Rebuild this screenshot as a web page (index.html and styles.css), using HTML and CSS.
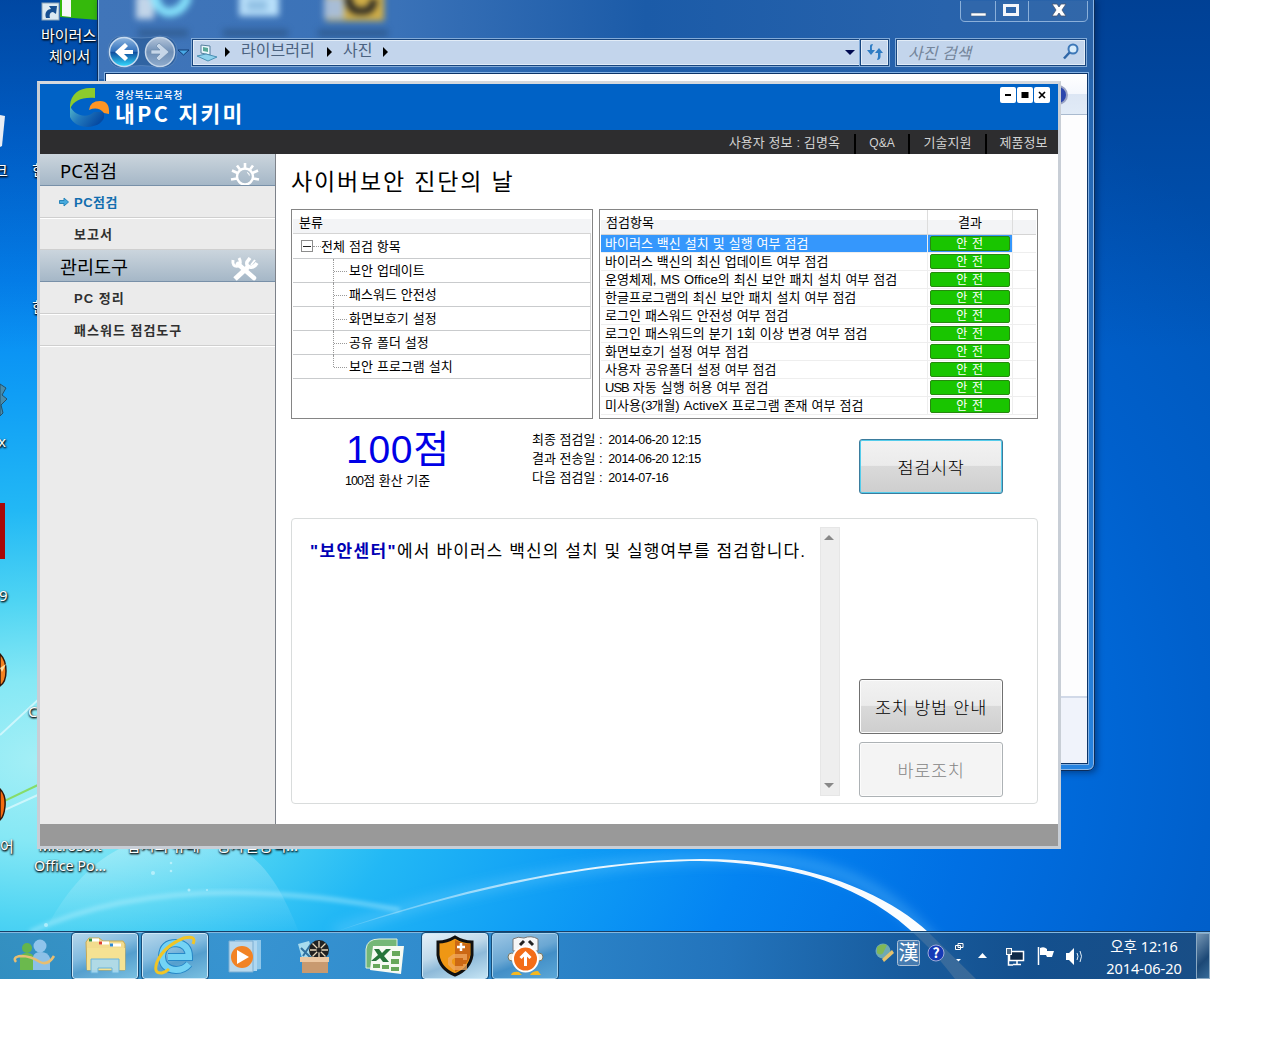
FILE: index.html
```html
<!DOCTYPE html>
<html lang="ko">
<head>
<meta charset="utf-8">
<title>내PC 지키미</title>
<link rel="stylesheet" href="styles.css">
</head>
<body>
<div class="desktop">
  <svg class="wallpaper" width="1210" height="979" viewBox="0 0 1210 979">
    <defs>
      <filter id="soft"><feGaussianBlur stdDeviation="2"/></filter>
      <filter id="glow" x="-20%" y="-20%" width="140%" height="140%"><feGaussianBlur stdDeviation="6"/></filter>
      <linearGradient id="orb" x1="0" y1="0" x2="0" y2="1"><stop offset="0" stop-color="#fff" stop-opacity=".3"/><stop offset="1" stop-color="#fff" stop-opacity="0"/></linearGradient>
      <linearGradient id="beam" x1="0" x2="1"><stop offset="0" stop-color="#fff" stop-opacity=".1"/><stop offset=".4" stop-color="#fff" stop-opacity=".9"/><stop offset="1" stop-color="#fff"/></linearGradient>
    </defs>
    <path d="M40 940C70 880 110 835 180 835S275 870 302 940Z" fill="url(#orb)"/>
    <path d="M30 932C120 890 240 880 400 910" fill="none" stroke="#c4f4ff" stroke-opacity=".5" stroke-width="4" filter="url(#soft)"/>
    <path d="M335 932C450 890 600 858 730 858S900 900 965 979" fill="none" stroke="#7fd4ff" stroke-opacity=".35" stroke-width="10" filter="url(#glow)"/>
    <path d="M335 932C470 884 600 860 700 859C810 858 890 896 928 932L976 979L955 979C900 905 830 864 700 861C600 861 470 888 335 932Z" fill="url(#beam)"/>
    <path d="M0 803L40 784" stroke="#86dc6a" stroke-width="2"/><path d="M0 812L40 794M0 735L40 698" stroke="#e4fbff" stroke-width="2" stroke-opacity=".7"/>
    <g fill="#d8f8ff" fill-opacity=".6"><circle cx="153" cy="873" r="2"/><circle cx="171" cy="863" r="1.3"/><circle cx="171" cy="871" r="1.3"/><circle cx="189" cy="890" r="1.5"/><circle cx="46" cy="925" r="2"/><circle cx="207" cy="890" r="1"/></g>
    <path d="M0 115L5 116L2 146L0 147Z" fill="#e8edf4"/>
    <path d="M0 384L6 388L2 395L7 399L1 405L3 413L0 416Z" fill="#4a8cab" stroke="#24506a"/>
    <rect y="503" width="5" height="56" fill="#a80808"/>
    <path d="M0 654Q6 660 6 671T0 686Z" fill="#f58220" stroke="#31170a" stroke-width="1.5"/><path d="M0 668L6 664L2 672Z" fill="#ffe0a0"/>
    <path d="M0 789Q6 795 5 806T0 820Z" fill="#f56c10" stroke="#31170a" stroke-width="1.5"/>
    <path d="M60 0H99V20L60 17Z" fill="#35b90c"/><path d="M62 0H71V17L62 16Z" fill="#f7f7f7"/>
    <rect x="42" y="3" width="17" height="17" fill="#dce9f2" stroke="#8aa3b8"/><path d="M46 18C44 12 48 9 51 9L49 6L57 6L56 14L53 12C50 12 49 15 50 18Z" fill="#174f91"/>
  </svg>
  <span class="label l1">바이러스</span><span class="label l2">체이서</span>
  <span class="label l3">크</span><span class="label l4">한</span><span class="label l5">한</span>
  <span class="label l6">x</span><span class="label l7">9</span><span class="label l8">C</span><span class="label l9">어</span>
  <span class="label l10">Microsoft<br>Office Po...</span><span class="label l11">압시의 유래</span><span class="label l12">공사설정덱...</span>

  <section class="explorer">
    <svg class="behind-glass" width="320" height="50" viewBox="0 0 320 50">
      <g class="blurred"><rect x="38" y="-4" width="18" height="24" fill="#c2d5e9"/><path d="M56 -6Q60 16 74 13Q86 11 90 -4" fill="none" stroke="#86e2fb" stroke-width="9"/><rect x="141" y="-5" width="40" height="22" fill="#b9e0fa"/><path d="M149 4H169M149 9H169" stroke="#78acd6" stroke-width="3"/><rect x="228" y="-8" width="58" height="30" fill="#d0ae47"/><path d="M250 -4Q251 12 261 12H267Q275 11 276 0" fill="none" stroke="#222" stroke-width="7"/><rect x="226" y="-2" width="20" height="22" fill="#a8bdd6"/><path d="M40 34H90M125 34H190M220 34H290" stroke="#24476e" stroke-opacity=".45" stroke-width="8"/></g>
    </svg>
    <div class="caption-row">
      <svg width="128" height="22" viewBox="0 0 128 22">
        <path d="M.5 0V16Q.5 20.500 5 20.500H123Q127.500 20.500 127.500 16V0" fill="#3a6dab" fill-opacity=".45" stroke="#8bb0da"/><path d="M35.500 0V20M68.500 0V20" stroke="#8bb0da"/>
        <rect x="11" y="12" width="15" height="3" fill="#fff" stroke="#4c6485" stroke-width=".6"/><rect x="44.500" y="4.500" width="13" height="9" fill="none" stroke="#f4f6fa" stroke-width="3"/>
        <path d="M92 3L97 3L99 6L101 3L106 3L102 9L106 15L101 15L99 12L97 15L92 15L96 9Z" fill="#fff" stroke="#44536e" stroke-width=".8"/>
      </svg>
    </div>
    <div class="nav-row">
      <svg class="arrows" width="86" height="34" viewBox="0 0 86 34">
        <defs><linearGradient id="back" x1="0" y1="0" x2="0" y2="1"><stop offset="0" stop-color="#8fb6e0"/><stop offset=".48" stop-color="#2f6fbb"/><stop offset=".5" stop-color="#0f4a9c"/><stop offset="1" stop-color="#35dcff"/></linearGradient><linearGradient id="fwd" x1="0" y1="0" x2="0" y2="1"><stop offset="0" stop-color="#b3c4d9"/><stop offset=".5" stop-color="#6f8fb6"/><stop offset="1" stop-color="#8fabcc"/></linearGradient></defs>
        <path d="M3 17Q3 1 18 1Q36 5 55 1Q72 1 72 17Q72 33 55 33Q36 28 18 33Q3 33 3 17Z" fill="#25558f" fill-opacity=".55" stroke="#6791c4" stroke-opacity=".6"/>
        <circle cx="19" cy="17" r="14.500" fill="url(#back)" stroke="#c7dbf0" stroke-width="1.500"/><circle cx="55" cy="17" r="14.500" fill="url(#fwd)" stroke="#c3d4e7" stroke-width="1.500"/>
        <path d="M28 15V19H19L23 23L20 26L10 17L20 8L23 11L19 15Z" fill="#fff"/><path d="M46 15V19H55L51 23L54 26L64 17L54 8L51 11L55 15Z" fill="#c6d6e8" stroke="#6f8cae" stroke-width=".7"/>
        <path d="M73 15H84L78.500 20Z" fill="#48a8e5" stroke="#123d75"/>
      </svg>
      <div class="address">
        <svg width="22" height="22" viewBox="0 0 22 22"><path d="M5 4L14 5V14L5 12Z" fill="#eaf7fc" stroke="#557f9d"/><path d="M7 6L12 7V11L7 10Z" fill="#58a898"/><path d="M1 15L10 13L21 16L12 20Z" fill="#8ed2ed" stroke="#4b91b4"/></svg>
        <i class="tri"></i><span class="crumb c1">라이브러리</span><i class="tri"></i><span class="crumb c2">사진</span><i class="tri"></i>
        <i class="drop"></i>
      </div>
      <div class="refresh"><svg width="18" height="18" viewBox="0 0 18 18"><path d="M1 7H4V3Q4 1 7 1Q5.500 3 6 7H9L5 12ZM9 10L13 5L17 10H14.500V14Q14 17 11 17Q12.500 14 12 10Z" fill="#2e7cc4"/></svg></div>
      <div class="search"><em>사진 검색</em><svg width="18" height="18" viewBox="0 0 18 18"><circle cx="11" cy="6" r="4.500" fill="#d8ecfb" stroke="#3d78b8" stroke-width="2"/><path d="M7.500 9.500L2 15.500" stroke="#2f66a7" stroke-width="2.500"/></svg></div>
    </div>
    <div class="explorer-body"><div class="tool-strip"><svg width="20" height="20" viewBox="0 0 20 20"><circle cx="10" cy="10" r="9" fill="#2b46ad" stroke="#9ba4c4" stroke-width="2"/></svg></div><div class="files"></div><div class="details"></div></div>
  </section>

  <main class="app">
    <header class="titlebar">
      <div class="brand">
        <svg width="40" height="40" viewBox="0 0 40 40">
          <defs><linearGradient id="bowl" x1="0" x2="1" y1="0" y2=".5"><stop offset="0" stop-color="#54b8ca"/><stop offset=".45" stop-color="#2279bd"/><stop offset="1" stop-color="#064aa2"/></linearGradient></defs>
          <path d="M0 18V29C5 42 29 42 34 30V24H24C18 30 5 29 0 18Z" fill="url(#bowl)"/>
          <path d="M0 21C-1 8 8 0 20 0H25V10C12 9 4 12 0 21Z" fill="#8dcb2d"/>
          <path d="M19 22Q20 13 30 13T39 26L34 25Q28 18 19 22Z" fill="#ff9524"/>
        </svg>
        <div class="wordmark"><small>경상북도교육청</small><strong>내PC 지키미</strong></div>
      </div>
      <div class="win-buttons">
        <svg viewBox="0 0 16 16"><path d="M5 8H11" stroke="#000" stroke-width="2"/></svg>
        <svg viewBox="0 0 16 16"><path d="M4.500 5H11.500V11H4.500Z"/></svg>
        <svg viewBox="0 0 16 16"><path d="M5 5L11 11M11 5L5 11" stroke="#000" stroke-width="1.700"/></svg>
      </div>
    </header>
    <nav class="topnav"><span class="user">사용자 정보 : 김명옥</span><span class="qa">Q&amp;A</span><span class="tech">기술지원</span><span class="prod">제품정보</span></nav>
    <div class="middle">
      <aside class="sidebar">
        <h2>PC점검
          <svg width="30" height="22" viewBox="0 0 30 22"><g stroke="#fff" fill="none"><circle cx="15" cy="13.500" r="8" stroke-width="2.400"/><path d="M15 5V0M10 6.500L7 2.500M20 6.500L23 2.500M7.500 10L2 7.500M22.500 10L28 7.500M7 15.500L1 16.500M23 15.500L29 16.500" stroke-width="2.600"/><path d="M17 9.500Q19 10 19.500 12.500" stroke-width="1.200"/></g></svg>
        </h2>
        <a class="active"><svg width="10" height="10" viewBox="0 0 10 10"><path d="M.5 3.500H5V1L9.500 5L5 9V6.500H.5Z" fill="#46a9dc" stroke="#2784b9"/></svg>PC점검</a>
        <a>보고서</a>
        <h2>관리도구
          <svg width="30" height="24" viewBox="0 0 30 24"><g fill="none" stroke="#fff"><path d="M8 7L24 21" stroke-width="4.500" stroke-linecap="round"/><path d="M3 3Q2 10 8 9Q12 6 9 1" stroke-width="3"/><path d="M5 22L18 10" stroke-width="5"/><path d="M20 1L17 5Q16 9 20 10Q24 11 27 6" stroke-width="3.500"/><path d="M21 8L25 3" stroke-width="2"/></g></svg>
        </h2>
        <a>PC 정리</a>
        <a>패스워드 점검도구</a>
      </aside>
      <section class="content">
        <h1>사이버보안 진단의 날</h1>
        <div class="panels">
          <div class="tree">
            <div class="thead">분류</div>
            <div class="root"><i class="box"></i><i class="dots"></i>전체 점검 항목</div>
            <div class="leaf">보안 업데이트</div><div class="leaf">패스워드 안전성</div><div class="leaf">화면보호기 설정</div><div class="leaf">공유 폴더 설정</div><div class="leaf last">보안 프로그램 설치</div>
          </div>
          <div class="checks">
            <div class="row head"><span>점검항목</span><span>결과</span><span></span></div>
            <div class="row selected"><span>바이러스 백신 설치 및 실행 여부 점검</span><span><b>안 전</b></span><span></span></div>
            <div class="row"><span>바이러스 백신의 최신 업데이트 여부 점검</span><span><b>안 전</b></span><span></span></div>
            <div class="row"><span>운영체제, MS Office의 최신 보안 패치 설치 여부 점검</span><span><b>안 전</b></span><span></span></div>
            <div class="row"><span>한글프로그램의 최신 보안 패치 설치 여부 점검</span><span><b>안 전</b></span><span></span></div>
            <div class="row"><span>로그인 패스워드 안전성 여부 점검</span><span><b>안 전</b></span><span></span></div>
            <div class="row"><span>로그인 패스워드의 분기 1회 이상 변경 여부 점검</span><span><b>안 전</b></span><span></span></div>
            <div class="row"><span>화면보호기 설정 여부 점검</span><span><b>안 전</b></span><span></span></div>
            <div class="row"><span>사용자 공유폴더 설정 여부 점검</span><span><b>안 전</b></span><span></span></div>
            <div class="row"><span><i>USB</i> 자동 실행 허용 여부 점검</span><span><b>안 전</b></span><span></span></div>
            <div class="row"><span>미사용(<i>3</i>개월) ActiveX 프로그램 존재 여부 점검</span><span><b>안 전</b></span><span></span></div>
          </div>
        </div>
        <div class="summary">
          <div class="score"><strong>100점</strong><span><i>100</i>점 환산 기준</span></div>
          <div class="dates"><span>최종 점검일 : <i>2014-06-20 12:15</i></span><span>결과 전송일 : <i>2014-06-20 12:15</i></span><span>다음 점검일 : <i>2014-07-16</i></span></div>
          <button class="btn primary">점검시작</button>
        </div>
        <div class="detail">
          <p><b>"보안센터"</b>에서 바이러스 백신의 설치 및 실행여부를 점검합니다.</p>
          <div class="scroll"><i class="up"></i><i class="down"></i></div>
          <div class="actions"><button class="btn">조치 방법 안내</button><button class="btn off">바로조치</button></div>
        </div>
      </section>
    </div>
    <footer class="statusbar"></footer>
  </main>

  <div class="taskbar">
    <div class="task"><svg width="44" height="40" viewBox="0 0 44 40"><circle cx="14" cy="12" r="5" fill="#63b54d"/><path d="M7 34V22Q8 17 14 17T21 22V34Z" fill="#6bb94d"/><circle cx="27" cy="10" r="6.500" fill="#8fc4ec"/><path d="M20 34V21Q21 16 28 16T37 22V34Z" fill="#8cc0e8"/><path d="M3 26Q-1 21 8 20Q18 20 27 26Q35 30 41 20" fill="none" stroke="#e7be72" stroke-width="2.500"/></svg></div>
    <div class="task open"><svg width="44" height="42" viewBox="0 0 44 42"><path d="M3 7L6 3H16L20 6H40L42 9V35H4Z" fill="#f2dc8e" stroke="#c8aa55"/><path d="M6 5H16M16 8H26M27 10H38" stroke="#fff" stroke-width="3"/><path d="M6 5H9" stroke="#36913e" stroke-width="3"/><path d="M16 8H19" stroke="#df4130" stroke-width="3"/><path d="M27 10H30" stroke="#308ad1" stroke-width="3"/><path d="M4 13H42V35H4Z" fill="#f5e293"/><path d="M8 24H36V38H29V33H15V38H8Z" fill="#a8d9f0" fill-opacity=".9" stroke="#68b4dc"/></svg></div>
    <div class="task open"><svg width="44" height="42" viewBox="0 0 44 42"><path d="M36 29Q31 35 23 35Q9 34 9 21Q10 8 23 8Q36 9 36 22H15" fill="none" stroke="#2688c8" stroke-width="8"/><path d="M36 29Q31 35 23 35Q9 34 9 21Q10 8 23 8Q36 9 36 22H15" fill="none" stroke="#73d3f5" stroke-width="6"/><path d="M40 9Q44 0 31 3Q11 11 4 27Q0 39 9 38Q13 37 16 34" fill="none" stroke="#f1c526" stroke-width="3"/></svg></div>
    <div class="task"><svg width="44" height="40" viewBox="0 0 44 40"><path d="M12 4H38V33L12 36Z" fill="#8fc7ea"/><path d="M9 5H34V35H9Z" fill="#aed7f1"/><path d="M6 5H30V36H6Z" fill="#b8d8ec" stroke="#7baed3"/><circle cx="19" cy="21" r="11" fill="#f28324"/><path d="M14 14V28L26 21Z" fill="#fff"/></svg></div>
    <div class="task"><svg width="44" height="40" viewBox="0 0 44 40"><path d="M5 8L16 5L22 22H9Z" fill="#a8dcee"/><path d="M8 12L18 22M18 8L10 20" stroke="#3272a0" stroke-width="2"/><circle cx="26" cy="14" r="10" fill="#222"/><g stroke="#e8d9bd" stroke-width="1.300"><path d="M26 5V23M17 14H35M19.500 7.500L32.500 20.500M32.500 7.500L19.500 20.500"/></g><circle cx="26" cy="14" r="2.500" fill="#222"/><path d="M9 22H35V37H9Z" fill="#c89a70"/><path d="M7 21H36V26H7Z" fill="#ecc8a2"/></svg></div>
    <div class="task"><svg width="44" height="40" viewBox="0 0 44 40"><path d="M3 32V13Q4 3 16 3H34V33Z" fill="#75b777" stroke="#e2f2df"/><path d="M10 10H41L38 38L7 34Z" fill="#f6faf3"/><path d="M29 15H37V20H29ZM28 23H36V28H28ZM10 28H17V32H10ZM19 29H26V33H19ZM28 31H36V35H28Z" fill="#68a85b"/><path d="M11 13H16L19 17L23 13H28L21 20L26 26H20L17 22L13 25H8L15 19Z" fill="#26743a"/></svg></div>
    <div class="task open bright"><svg width="40" height="42" viewBox="0 0 40 42"><path d="M20 2Q28 7 37 7V20Q35 34 20 40Q5 34 3 20V7Q12 7 20 2Z" fill="#ef9714" stroke="#101010" stroke-width="3"/><path d="M20 5Q28 9 35 9V20Q33 31 20 37Z" fill="#cc6814"/><path d="M26 8V16M22 12H30" stroke="#fff" stroke-width="2.500"/><path d="M30 25V21H19L15 24V29L19 33H30V29" fill="none" stroke="#f0a860" stroke-opacity=".75" stroke-width="4"/></svg></div>
    <div class="task open dim"><svg width="40" height="42" viewBox="0 0 40 42"><path d="M8 4Q13 1 19 3Q26 0 33 4V16H8Z" fill="#f6f6f6" stroke="#777"/><path d="M15 10L19 6M24 6L28 10" stroke="#222" stroke-width="3"/><circle cx="7" cy="22" r="4" fill="#f2eee2" stroke="#776"/><circle cx="34" cy="22" r="4" fill="#f2eee2" stroke="#776"/><circle cx="20.500" cy="24" r="12.500" fill="#f36d18" stroke="#fff" stroke-width="2"/><path d="M20.500 18V31M15.500 23L20.500 18L25.500 23" fill="none" stroke="#fff" stroke-width="3"/><path d="M6 40Q7 36 14 37L17 40ZM25 40Q27 36 33 36L36 40Z" fill="#f5b821"/></svg></div>
    <div class="tray">
      <svg width="220" height="46" viewBox="870 933 220 46">
        <circle cx="883" cy="951" r="7.500" fill="#6ea9b4"/><path d="M877 947Q882 943 887 945L884 951Q882 957 877 953Z" fill="#80b857"/><path d="M882 959L892 950L894 953L884 962Z" fill="#e5c26c"/>
        <rect x="897.500" y="940.500" width="22" height="25" rx="2" fill="#fff" fill-opacity=".2" stroke="#adc1d5"/><text x="908.500" y="960" font-size="20" fill="#fff" text-anchor="middle">漢</text>
        <circle cx="936" cy="953" r="8" fill="#1639b6" stroke="#9eabd8"/><text x="936" y="958" font-size="14" font-weight="700" fill="#fff" text-anchor="middle">?</text>
        <path d="M958 943.500H963V947.500H958ZM955.500 945.500H960.500V949.500H955.500Z" fill="#244d7c" stroke="#fff"/><path d="M956 959H961L958.500 961.500Z" fill="#fff"/><path d="M978 958H987L982.500 953Z" fill="#fff"/>
        <path d="M1011.500 951.500H1023.500V960.500H1009.500V952" fill="#102a48" stroke="#fff" stroke-width="1.500"/><path d="M1013 964.500H1021M1017 961V965M1008.500 955V965H1013" stroke="#fff" stroke-width="1.500" fill="none"/><rect x="1006.500" y="948.500" width="5" height="6" fill="#4f6b86" stroke="#fff"/>
        <path d="M1038.500 947V965" stroke="#fff" stroke-width="1.500"/><path d="M1040 948Q1044 946 1047 949V951H1054L1052 957H1047L1046 955H1040Z" fill="#fff"/>
        <path d="M1066 953H1069L1074 948V965L1069 960H1066Z" fill="#fff"/><path d="M1077 953Q1079 956 1077 960M1080 951Q1083 956 1080 962" fill="none" stroke="#e2eef7"/>
      </svg>
      <div class="clock"><span>오후 12:16</span><span>2014-06-20</span></div>
      <div class="peek"></div>
    </div>
  </div>
</div>
</body>
</html>
```
FILE: styles.css
```css
* { box-sizing: border-box; }
body { margin: 0; background: #fff; font-family: "Liberation Sans", "Noto Sans CJK KR", sans-serif; font-size: 13px; color: #000; }
h1, h2, p { margin: 0; font-weight: 400; }
i { font-style: normal; }
svg { display: block; flex: none; }

.desktop {
  position: relative; width: 1210px; height: 979px; overflow: hidden;
  background:
    linear-gradient(#00206066 0, #00206000 350px),
    radial-gradient(1500px 1000px at 40px 760px, #a4eff6 0, #86e8f5 8%, #4ed4f3 16%, #22b8f5 25%, #0f9df5 37%, #0484f2 48%, #0070e4 62%, #0060cc 78%, #0056b8 95%);
}
.wallpaper { position: absolute; left: 0; top: 0; }
.label { position: absolute; color: #fff; font: 15px/20px "Noto Sans", "Noto Sans CJK KR", sans-serif; text-align: center; white-space: nowrap; text-shadow: 1px 1px 2px #000, 0 1px 2px #000; }
.l1 { left: 41px; top: 25px; } .l2 { left: 49px; top: 46px; }
.l3 { left: -6px; top: 160px; } .l4 { left: 32px; top: 160px; } .l5 { left: 32px; top: 297px; }
.l6 { left: -2px; top: 431px; } .l7 { left: -1px; top: 585px; } .l8 { left: 28px; top: 701px; } .l9 { left: 0; top: 836px; }
.l10 { left: 34px; top: 836px; font-size: 14.300px; } .l11 { left: 127px; top: 835px; } .l12 { left: 217px; top: 835px; }

/* file browser */
.explorer {
  position: absolute; left: 97px; top: -2px; width: 998px; height: 773px; padding: 2px 6px 6px 7px;
  display: flex; flex-direction: column; border: 1px solid #0c2d5b; border-radius: 0 0 7px 7px;
  background: linear-gradient(90deg, #4075b9 0, #3a72b8 30%, #1b5ba8 55%, #2863ac 85%, #2a63a8) 0 0 / 100% 80px no-repeat, linear-gradient(#2763aa 0, #2671c4 50%, #2683e0);
  box-shadow: inset 0 0 0 1px #8ab5e5, 2px 2px 6px #001b4580;
}
.behind-glass { position: absolute; left: 0; top: 0; }
.blurred { filter: blur(3px); }
.caption-row { height: 36px; display: flex; justify-content: flex-end; }
.nav-row { position: relative; height: 34px; display: flex; align-items: center; margin-top: -2px; }
.address, .refresh, .search { height: 27px; display: flex; align-items: center; background: #c3d5ec; border: 1px solid #17457e; box-shadow: 0 0 0 1px #83abd8, inset 0 0 0 1px #e2ecf7; }
.address { width: 669px; margin-left: 1px; padding: 0 5px 0 3px; color: #4b6280; font-size: 16px; }
.tri { border-left: 5px solid #000; border-top: 5px solid transparent; border-bottom: 5px solid transparent; margin-left: 7px; }
.crumb { margin-left: 11px; line-height: 24px; margin-top: -2px; }
.c1 { width: 79px; } .c2 { width: 33px; }
.drop { margin-left: auto; border-top: 5px solid #000a50; border-left: 5px solid transparent; border-right: 5px solid transparent; }
.refresh { width: 29px; margin-left: -1px; justify-content: center; }
.search { width: 190px; margin-left: 7px; padding: 0 5px 0 11px; justify-content: space-between; color: #74859b; font-size: 16px; }
.explorer-body { margin-top: 4px; flex: 1; display: flex; flex-direction: column; background: #fdfdfe; border: 1px solid #0c3468; box-shadow: 0 0 0 1px #84b2e4; }
.tool-strip { height: 41px; padding: 11px 19px; display: flex; justify-content: flex-end; background: linear-gradient(#fff 0, #f4f7fd 50%, #dce6f4 51%, #e1ebf7); border-bottom: 1px solid #a9bacf; }
.files { flex: 1; }
.details { height: 67px; background: #f0f3fb; border-top: 2px solid #d1d9e8; }

/* security checker */
.app { position: absolute; left: 37px; top: 81px; width: 1024px; height: 768px; border: 3px solid #c8ced6; border-top-color: #d5d9de; display: flex; flex-direction: column; background: #fff; }
.titlebar { height: 46px; background: #0062c6; display: flex; justify-content: space-between; align-items: flex-start; padding: 3px 8px 0 30px; }
.brand { display: flex; gap: 5px; margin-top: 1px; color: #fff; }
.wordmark { display: flex; flex-direction: column; font-family: "Noto Sans CJK KR", sans-serif; white-space: nowrap; }
.wordmark small { font-size: 10px; line-height: 14px; font-weight: 500; letter-spacing: .5px; }
.wordmark strong { font-size: 21.500px; line-height: 21px; font-weight: 700; letter-spacing: 2.300px; }
.win-buttons { display: flex; gap: 1px; }
.win-buttons svg { width: 16px; height: 16px; background: #fff; border-radius: 2px; }
.topnav { height: 24px; background: #2d2d2f; color: #d2d2d2; display: flex; justify-content: flex-end; align-items: flex-end; white-space: nowrap; }
.topnav span { height: 20px; line-height: 18px; text-align: center; border-left: 2px solid #000; }
.topnav .user { border: 0; padding-right: 14px; letter-spacing: .1px; } .topnav .qa { width: 54px; font-size: 12px; } .topnav .tech { width: 77px; } .topnav .prod { width: 73px; padding-left: 2px; }
.middle { height: 670px; flex: none; display: flex; }
.sidebar { width: 236px; background: #ebebeb; border-right: 1px solid #7d828a; }
.sidebar h2 { height: 32px; padding: 0 15px 0 20px; display: flex; justify-content: space-between; align-items: flex-end; font: 18.500px/29px "Noto Sans", "Noto Sans CJK KR", sans-serif; background: linear-gradient(#cbd5dd, #a5b7c7); border-bottom: 1px solid #7890a8; }
.sidebar a { height: 32px; padding: 0 0 0 34px; display: flex; align-items: center; font-weight: 700; letter-spacing: 1px; color: #303030; border-bottom: 1px solid #cfcfcf; box-shadow: 0 1px #fff; }
.sidebar a.active { color: #126eaf; padding-left: 19px; gap: 5px; letter-spacing: .5px; }
.content { width: 782px; padding: 0 20px 0 15px; }
h1 { height: 55px; font-size: 23px; line-height: 56px; letter-spacing: 1.850px; }
.panels { display: flex; gap: 6px; height: 210px; word-spacing: .4px; white-space: nowrap; }
.tree { width: 302px; border: 1px solid #858585; padding: 0 1px; }
.thead { height: 24px; padding-left: 6px; line-height: 25px; background: linear-gradient(#fff 40%, #f3f4f6 41%); border-bottom: 1px solid #d4d4d4; }
.root, .leaf { height: 24px; line-height: 23px; border-bottom: 1px solid #c9cbcd; border-right: 1px solid #d4d4d4; }
.root { height: 25px; display: flex; align-items: center; padding-left: 8px; }
.box { width: 12px; height: 12px; border: 1px solid #8c8c8c; background: linear-gradient(#222, #222) center / 8px 1px no-repeat; }
.dots { width: 8px; border-top: 1px dotted #999; }
.leaf { position: relative; padding-left: 56px; }
.leaf::before { content: ""; position: absolute; left: 40px; top: 0; height: 24px; border-left: 1px dotted #999; }
.leaf::after { content: ""; position: absolute; left: 41px; top: 12px; width: 13px; border-top: 1px dotted #999; }
.leaf.last::before { height: 12px; }
.checks { width: 439px; border: 1px solid #858585; padding: 0 1px; overflow: hidden; }
.row { height: 18px; display: grid; grid-template-columns: 327px 85px 1fr; line-height: 17px; border-bottom: 1px solid #eee; }
.row span { padding-left: 4px; border-right: 1px solid #eee; }
.row span:nth-child(2) { padding: 1px 2px 0; }
.row span:last-child { border: 0; }
.row i { letter-spacing: -1px; }
.row b { display: block; height: 15px; line-height: 15px; border: 1px solid #27880f; border-radius: 2px; background: #19c500; color: #fff; font-weight: 400; font-size: 12px; letter-spacing: .5px; text-align: center; }
.row.head { height: 25px; line-height: 25px; background: linear-gradient(#fff 40%, #f3f4f6 41%); border-bottom: 1px solid #d4d4d4; }
.row.head span { padding-left: 5px; border-color: #ddd; }
.row.head span:nth-child(2) { text-align: center; padding: 0; }
.selected span { background: #3597fc; color: #fff; }
.selected span:last-child { background: #fff; }
.summary { height: 99px; display: flex; align-items: flex-start; white-space: nowrap; }
.score { width: 241px; padding: 7px 0 0 54px; display: flex; flex-direction: column; }
.score strong { margin-left: 1px; font-size: 39px; line-height: 47px; font-weight: 400; letter-spacing: .7px; color: #0000e6; }
.score span { line-height: 15px; }
.score i { letter-spacing: -.9px; }
.score i, .dates i { font-size: 12.500px; line-height: 1; }
.dates { width: 327px; padding-top: 11px; display: flex; flex-direction: column; }
.dates span { height: 19px; line-height: 19px; }
.dates i { margin-left: 2px; letter-spacing: -.380px; }
.btn { width: 144px; height: 55px; padding: 0; border: 1px solid #707070; border-radius: 3px; box-shadow: inset 0 0 0 1px #fcfcfc; background: linear-gradient(#f2f2f2 0, #ebebeb 48%, #dadada 49%, #cecece); font: 300 17.500px "Liberation Sans", "Noto Sans CJK KR", sans-serif; letter-spacing: .7px; color: #000; }
.btn.primary { margin-top: 20px; border-color: #3b7c9d; box-shadow: inset 0 0 0 1px #54cceb; }
.btn.off { background: #f4f4f4; border-color: #adb2b5; color: #858585; }
.detail { width: 747px; height: 286px; border: 1px solid #d9dcdc; border-radius: 4px; padding: 8px 0 0 18px; display: flex; }
.detail p { width: 510px; padding-top: 12px; font-size: 17px; line-height: 26px; letter-spacing: 1.100px; white-space: nowrap; }
.detail p b { color: #0000b4; letter-spacing: 1.400px; }
.scroll { width: 20px; height: 269px; background: #eee; border: 1px solid #e6e6e6; display: flex; flex-direction: column; justify-content: space-between; align-items: center; padding: 7px 2px 7px 0; }
.up { border-bottom: 5px solid #888; border-left: 5px solid transparent; border-right: 5px solid transparent; }
.down { border-top: 5px solid #888; border-left: 5px solid transparent; border-right: 5px solid transparent; }
.actions { margin-left: 19px; padding-top: 152px; display: flex; flex-direction: column; gap: 8px; }
.statusbar { height: 22px; flex: none; background: #999; }

/* taskbar */
.taskbar { position: absolute; left: 0; top: 931px; width: 1210px; height: 48px; display: flex; padding: 1px 0 0; border-top: 1px solid #173f68; box-shadow: inset 0 1px #84b8df; background: linear-gradient(90deg, #3289bbe6 0, #398fcde6 20%, #3186c7e6 42%, #2672b6e6 60%, #1b5893e0 75%, #174b80d8 85%, #1c4c7ee6); }
.task { width: 68px; height: 46px; margin: 0 1px; display: flex; align-items: center; justify-content: center; }
.open { border: 1px solid #cfe9f8; border-radius: 3px; outline: 1px solid #174d78; outline-offset: 0; width: 66px; margin: 0 2px; background: linear-gradient(160deg, #b4d6eb 0, #83bbdf 40%, #559fce 60%, #7ac0e1); }
.bright { background: linear-gradient(160deg, #e4f0f8, #bfd9ea 40%, #8ebad9 60%, #c5e4f4); }
.dim { background: linear-gradient(160deg, #9cc6e5, #6aa7d3 45%, #438fc7 60%, #5ba7d8); border-color: #a6d3ef; }
.tray { margin-left: auto; display: flex; }
.tray text { font-family: "Noto Sans CJK KR", sans-serif; }
.clock { width: 106px; padding: 2px 0 0 2px; text-align: center; color: #fff; display: flex; flex-direction: column; font: 14.500px/22px "Noto Sans", "Noto Sans CJK KR", sans-serif; }
.peek { width: 14px; border: 1px solid #8ba9c3; background: linear-gradient(135deg, #7596b4, #1c4876 60%, #376b98); }
```
